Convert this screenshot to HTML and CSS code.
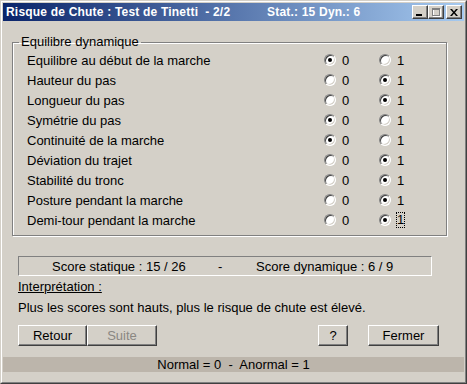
FILE: index.html
```html
<!DOCTYPE html>
<html lang="fr">
<head>
<meta charset="UTF-8" />
<title>Risque de Chute : Test de Tinetti</title>
<link rel="stylesheet" href="styles.css">
</head>
<body>
  <div class="window">
    <div class="frame">
      <div class="titlebar">
        <span class="title-main">Risque de Chute : Test de Tinetti&nbsp; - 2/2</span>
        <span class="title-stat">Stat.: 15 Dyn.: 6</span>
        <div class="caption-btns">
          <span class="cbtn">
            <svg width="8" height="7" viewBox="0 0 8 7"><rect x="0" y="5" width="6" height="2" fill="#000"/></svg>
          </span>
          <span class="cbtn">
            <svg width="9" height="9" viewBox="0 0 9 9"><rect x="1.5" y="1.5" width="7" height="7" fill="none" stroke="#fff"/><rect x="0.5" y="0.5" width="7" height="7" fill="none" stroke="#808080"/><rect x="0" y="1" width="8" height="1" fill="#808080"/></svg>
          </span>
          <span class="cbtn close">
            <svg width="8" height="7" viewBox="0 0 8 7"><path d="M0 0h2l2 2.5 2-2.5h2l-3 3.5 3 3.5h-2l-2-2.5-2 2.5h-2l3-3.5z" fill="#000"/></svg>
          </span>
        </div>
      </div>

      <div class="content">
        <fieldset class="group">
          <legend>Equilibre dynamique</legend>
          <div class="row"><span class="label">Equilibre au début de la marche</span><span class="opt"><i class="radio on"></i>0</span><span class="opt"><i class="radio"></i>1</span></div>
          <div class="row"><span class="label">Hauteur du pas</span><span class="opt"><i class="radio"></i>0</span><span class="opt"><i class="radio on"></i>1</span></div>
          <div class="row"><span class="label">Longueur du pas</span><span class="opt"><i class="radio"></i>0</span><span class="opt"><i class="radio on"></i>1</span></div>
          <div class="row"><span class="label">Symétrie du pas</span><span class="opt"><i class="radio on"></i>0</span><span class="opt"><i class="radio"></i>1</span></div>
          <div class="row"><span class="label">Continuité de la marche</span><span class="opt"><i class="radio on"></i>0</span><span class="opt"><i class="radio"></i>1</span></div>
          <div class="row"><span class="label">Déviation du trajet</span><span class="opt"><i class="radio"></i>0</span><span class="opt"><i class="radio on"></i>1</span></div>
          <div class="row"><span class="label">Stabilité du tronc</span><span class="opt"><i class="radio"></i>0</span><span class="opt"><i class="radio on"></i>1</span></div>
          <div class="row"><span class="label">Posture pendant la marche</span><span class="opt"><i class="radio"></i>0</span><span class="opt"><i class="radio on"></i>1</span></div>
          <div class="row"><span class="label">Demi-tour pendant la marche</span><span class="opt"><i class="radio"></i>0</span><span class="opt"><i class="radio on"></i><span class="focus">1</span></span></div>
        </fieldset>

        <div class="score">
          <span class="score-stat">Score statique : 15 / 26</span>
          <span class="score-sep">-</span>
          <span>Score dynamique : 6 / 9</span>
        </div>

        <div class="interp">Interprétation :</div>
        <p class="note">Plus les scores sont hauts, plus le risque de chute est élevé.</p>

        <div class="buttons">
          <button class="btn btn-retour">Retour</button>
          <button class="btn btn-suite" disabled>Suite</button>
          <span class="spacer"></span>
          <button class="btn btn-help">?</button>
          <button class="btn btn-close">Fermer</button>
        </div>
      </div>

      <div class="statusbar">Normal = 0&nbsp; -&nbsp; Anormal = 1</div>
    </div>
  </div>
</body>
</html>
```

FILE: styles.css
```css
body {
  margin: 0;
  font-family: "Liberation Sans", Arial, sans-serif;
  font-size: 13px;
  color: #000;
  background: #d4d0c8;
}

.window {
  width: 467px;
  height: 384px;
  box-sizing: border-box;
  border: 1px solid;
  border-color: #d4d0c8 #404040 #404040 #d4d0c8;
  background: #d4d0c8;
}

.frame {
  height: 100%;
  box-sizing: border-box;
  border: 1px solid;
  border-color: #fff #808080 #808080 #fff;
  padding: 1px;
  display: flex;
  flex-direction: column;
}

/* Title bar */
.titlebar {
  height: 18px;
  display: flex;
  align-items: center;
  padding-left: 3px;
  background: linear-gradient(to right, #0a246a, #a6caf0);
  color: #fff;
  font-weight: bold;
  font-size: 12px;
  letter-spacing: 0.2px;
  white-space: nowrap;
}

.title-main {
  width: 261px;
}

.caption-btns {
  margin-left: auto;
  margin-right: 2px;
  display: flex;
}

.cbtn {
  width: 16px;
  height: 14px;
  box-sizing: border-box;
  background: #d4d0c8;
  border: 1px solid;
  border-color: #fff #404040 #404040 #fff;
  box-shadow: inset -1px -1px #808080;
  display: flex;
  align-items: center;
  justify-content: center;
}

.cbtn.close {
  margin-left: 2px;
}

/* Content */
.content {
  flex: 1;
  padding-left: 15px;
}

.group {
  width: 435px;
  box-sizing: border-box;
  margin: 14px 0 0 -6px;
  padding: 1px 12px 5px 14px;
  border: 1px solid #808080;
  box-shadow: inset 1px 1px #fff, 1px 1px #fff;
}

.group legend {
  padding: 0 2px;
  margin-left: -8px;
  line-height: 14px;
}

.row {
  height: 20px;
  display: flex;
  align-items: center;
}

.label {
  flex: 1;
}

.opt {
  width: 55px;
  display: flex;
  align-items: center;
}

.radio {
  width: 12px;
  height: 12px;
  box-sizing: border-box;
  margin-right: 6px;
  border-radius: 50%;
  background: #fff;
  border: 1px solid;
  border-color: #808080 #fff #fff #808080;
  box-shadow: inset 1px 1px #404040, inset -1px -1px #d4d0c8;
  position: relative;
}

.radio.on::after {
  content: "";
  position: absolute;
  left: 3px;
  top: 3px;
  width: 4px;
  height: 4px;
  border-radius: 50%;
  background: #000;
}

.focus {
  outline: 1px dotted #000;
  outline-offset: 0;
  line-height: 14px;
}

/* Score */
.score {
  width: 414px;
  height: 20px;
  box-sizing: border-box;
  margin-top: 20px;
  padding-left: 33px;
  border: 1px solid;
  border-color: #808080 #fff #fff #808080;
  display: flex;
  align-items: center;
}

.score-stat {
  width: 166px;
}

.score-sep {
  width: 38px;
}

.interp {
  margin-top: 3px;
  line-height: 16px;
  text-decoration: underline;
}

.note {
  margin: 5px 0 0;
  line-height: 16px;
}

/* Buttons */
.buttons {
  display: flex;
  margin-top: 9px;
  width: 421px;
}

.spacer {
  flex: 1;
}

.btn {
  height: 21px;
  box-sizing: border-box;
  padding: 0;
  font-family: inherit;
  font-size: 13px;
  color: #000;
  background: #d4d0c8;
  border: 1px solid;
  border-color: #fff #404040 #404040 #fff;
  box-shadow: inset -1px -1px #808080;
}

.btn-retour {
  width: 69px;
}

.btn-suite {
  width: 70px;
  color: #8a8782;
}

.btn-help {
  width: 30px;
  margin-right: 20px;
}

.btn-close {
  width: 71px;
}

.statusbar {
  height: 15px;
  margin-bottom: 9px;
  background: #bcb5ab;
  text-align: center;
  line-height: 15px;
}
```
